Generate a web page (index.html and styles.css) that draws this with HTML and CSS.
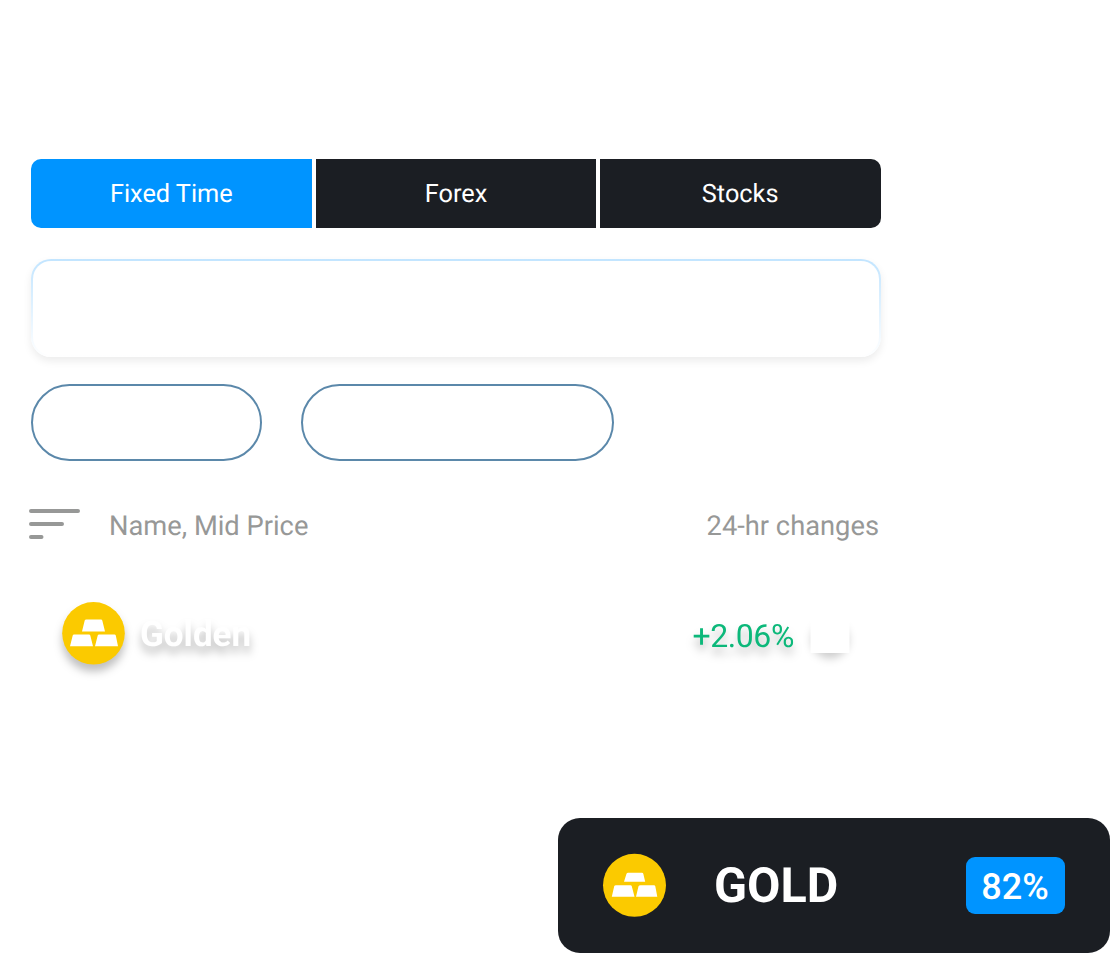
FILE: index.html
```html
<!DOCTYPE html>
<html lang="en">
<head>
<meta charset="utf-8">
<title>Markets</title>
<link rel="stylesheet" href="styles.css">
</head>
<body>
<main class="screen">
  <nav class="tabs">
    <div class="tab active">Fixed Time</div>
    <div class="tab">Forex</div>
    <div class="tab">Stocks</div>
  </nav>
  <div class="search"></div>
  <div class="chips">
    <div class="chip"></div>
    <div class="chip wide"></div>
  </div>
  <div class="list-head">
    <svg class="sort" width="51" height="34" viewBox="0 0 51 34"><path d="M2 3H49M2 16H33M2 29H12.500"/></svg>
    <span class="name-label">Name, Mid Price</span>
    <span class="change-label">24-hr changes</span>
  </div>
  <div class="row">
    <svg class="coin raised" width="64" height="64" viewBox="0 0 64 64"><circle cx="31.500" cy="32.300" r="31.300"/><path d="M24.300 18.500H39Q40 18.500 40.300 19.500L43 30.500H20L22.700 19.500Q23 18.500 24.300 18.500ZM12 33.500H27Q28 33.500 28.300 34.500L31 45.300H8L10.700 34.500Q11 33.500 12 33.500ZM37 33.500H52.500Q53.500 33.500 53.800 34.500L56 45.300H33L35.700 34.500Q36 33.500 37 33.500Z"/></svg>
    <span class="asset raised">Golden</span>
    <span class="change raised">+2.06%</span>
    <svg class="arrow" width="60" height="60" viewBox="0 0 60 60"><circle class="soft" cx="30" cy="25" r="18.500"/><path d="M10.500 0H49.500V45H10.500Z"/></svg>
  </div>
  <div class="ticket">
    <svg class="coin" width="64" height="64" viewBox="0 0 64 64"><circle cx="32.500" cy="32.300" r="31.500"/><path d="M26 19.800H40Q41 19.800 41.300 20.800L43.200 28.800H22L24.500 20.800Q25 19.800 26 19.800ZM14 32.300H28.500Q29.500 32.300 29.800 33.300L32.500 43.800H9.800L12.200 33.300Q12.500 32.300 14 32.300ZM38.500 32.300H52Q53 32.300 53.300 33.300L55.300 43.800H34L36.500 33.300Q37 32.300 38.500 32.300Z"/></svg>
    <span class="ticket-name">GOLD</span>
    <span class="badge">82%</span>
  </div>
</main>
</body>
</html>
```
FILE: styles.css
```css
* { box-sizing: border-box; }
body { margin: 0; background: #fff; font-family: Roboto, sans-serif; overflow: hidden; text-rendering: geometricPrecision; }
.screen { width: 1110px; height: 953px; padding: 158.600px 0 0 31px; }
.tabs { display: grid; grid-template-columns: repeat(3, 1fr); gap: 4px; width: 850px; height: 69.400px; }
.tab { display: flex; align-items: center; justify-content: center; padding-top: 2.500px; background: #1b1e23; color: #fff; font-size: 25.300px; }
.tab.active { background: #0094ff; }
.tab:first-child { border-radius: 10px 0 0 10px; }
.tab:last-child { padding-right: 1px; border-radius: 0 10px 10px 0; }
.search { width: 850px; height: 98px; margin-top: 31px; border: 2px solid transparent; border-radius: 20px; background: linear-gradient(#fff, #fff) padding-box, linear-gradient(#c2e5ff, #fff) border-box; box-shadow: 0 4px 8px rgba(0, 0, 0, .08); }
.chips { display: flex; gap: 39px; margin-top: 27px; }
.chip { width: 231px; height: 77.500px; border: 2px solid #5b88aa; border-radius: 39px; }
.chip.wide { width: 313.400px; }
.list-head { display: flex; align-items: center; width: 850px; height: 34px; margin: 46.500px 0 0 -2px; color: #979897; font-size: 27.300px; }
.sort { fill: none; stroke: #979897; stroke-width: 4; stroke-linecap: round; }
.name-label { margin-left: 29px; padding-top: 2.500px; }
.change-label { margin-left: auto; padding-top: 2.500px; }
.row { display: flex; align-items: center; width: 850px; height: 64px; margin-top: 59px; padding-left: 31px; }
.raised { filter: drop-shadow(0 7px 4px rgba(0, 0, 0, .25)); }
.soft { filter: drop-shadow(0 7px 4px rgba(0, 0, 0, .2)); }
.coin { flex: none; }
.coin circle { fill: #fbca00; }
.coin path { fill: #fff; }
.asset { margin: 4px 0 0 14px; color: #fff; font-size: 35px; font-weight: 700; }
.change { margin-left: auto; padding-top: 7px; color: #0cb87a; font-size: 32px; letter-spacing: -.4px; }
.arrow { margin: 10px 21px 0 6px; fill: #fff; }
.ticket { display: flex; align-items: center; width: 552px; height: 135px; margin: 153px 0 0 527px; padding: 0 45px 0 44px; border-radius: 22px; background: #1b1e23; color: #fff; }
.ticket-name { margin-left: 48px; font-size: 48.500px; font-weight: 700; }
.badge { display: flex; align-items: center; justify-content: center; width: 99px; height: 57px; margin-left: auto; padding: 3px 1px 0 0; border-radius: 9px; background: #0094ff; font-size: 36px; font-weight: 500; }
```
